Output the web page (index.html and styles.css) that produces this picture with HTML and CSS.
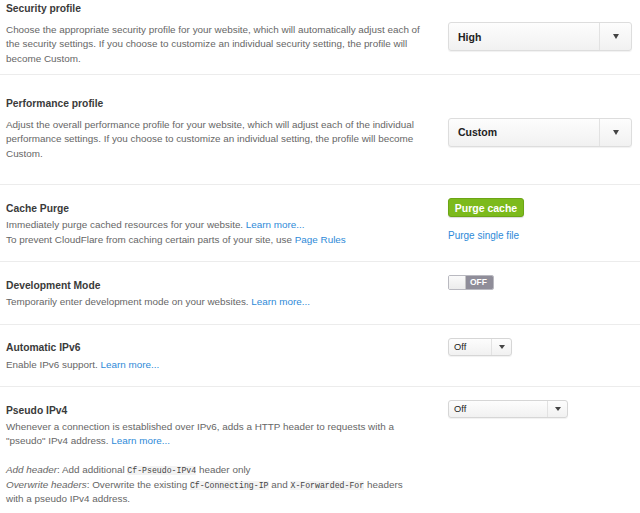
FILE: index.html
```html
<!DOCTYPE html>
<html lang="en">
<head>
  <meta charset="UTF-8" />
  <title>Settings</title>
  <link rel="stylesheet" href="styles.css">
</head>
<body>
  <div class="settings">
    <div class="row row-profile row-first">
      <div class="info">
        <h3>Security profile</h3>
        <p>Choose the appropriate security profile for your website, which will automatically adjust each of the security settings. If you choose to customize an individual security setting, the profile will become Custom.</p>
      </div>
      <div class="control">
        <div class="select select-lg"><span class="label">High</span><span class="arrow"><i class="caret"></i></span></div>
      </div>
    </div>

    <div class="row row-profile">
      <div class="info">
        <h3>Performance profile</h3>
        <p>Adjust the overall performance profile for your website, which will adjust each of the individual performance settings. If you choose to customize an individual setting, the profile will become Custom.</p>
      </div>
      <div class="control">
        <div class="select select-lg"><span class="label">Custom</span><span class="arrow"><i class="caret"></i></span></div>
      </div>
    </div>

    <div class="row">
      <div class="info">
        <h3>Cache Purge</h3>
        <p>Immediately purge cached resources for your website. <a href="#">Learn more...</a><br>To prevent CloudFlare from caching certain parts of your site, use <a href="#">Page Rules</a></p>
      </div>
      <div class="control">
        <button class="btn-green">Purge cache</button>
        <a href="#" class="single-link">Purge single file</a>
      </div>
    </div>

    <div class="row">
      <div class="info">
        <h3>Development Mode</h3>
        <p>Temporarily enter development mode on your websites. <a href="#">Learn more...</a></p>
      </div>
      <div class="control">
        <div class="toggle"><span class="knob"></span><span class="state">OFF</span></div>
      </div>
    </div>

    <div class="row">
      <div class="info">
        <h3>Automatic IPv6</h3>
        <p>Enable IPv6 support. <a href="#">Learn more...</a></p>
      </div>
      <div class="control">
        <div class="select select-sm"><span class="label">Off</span><span class="arrow"><i class="caret"></i></span></div>
      </div>
    </div>

    <div class="row row-last">
      <div class="info">
        <h3>Pseudo IPv4</h3>
        <p>Whenever a connection is established over IPv6, adds a HTTP header to requests with a "pseudo" IPv4 address. <a href="#">Learn more...</a></p>
        <p><em>Add header</em>: Add additional <code>Cf-Pseudo-IPv4</code> header only<br><em>Overwrite headers</em>: Overwrite the existing <code>Cf-Connecting-IP</code> and <code>X-Forwarded-For</code> headers with a pseudo IPv4 address.</p>
      </div>
      <div class="control">
        <div class="select select-sm select-wide"><span class="label">Off</span><span class="arrow"><i class="caret"></i></span></div>
      </div>
    </div>
  </div>
</body>
</html>
```

FILE: styles.css
```css
body { margin: 0; background: #fff; color: #666; font-family: "Liberation Sans", Arial, sans-serif; }
a { color: #2e8ad8; text-decoration: none; }

.row { display: flex; padding: 13px 0 14px; border-bottom: 1px solid #ececec; }
.row-last { border-bottom: none; }
.info { width: 416px; padding: 3.5px 0 0 6px; flex-shrink: 0; }
.info h3 { margin: 0 0 2.5px; font-size: 10.3px; line-height: 14px; color: #3a3a3a; }
.info p { margin: 0; font-size: 9.9px; line-height: 14.4px; }
.info p + p { margin-top: 14.4px; }
.info code { font-family: "Liberation Mono", monospace; font-size: 8.2px; line-height: 1; background: #f3f3f3; color: #444; }
.control { margin-left: 26px; display: flex; flex-direction: column; align-items: flex-start; }

.row-profile { padding: 22px 0 23.5px; }
.row-first { padding-top: 2px; padding-bottom: 7.5px; }
.row-profile .info { padding-top: 0; }
.row-profile .info h3 { margin-bottom: 7px; }
.row-profile .control { margin-top: 21px; }
.row-first .control { margin-top: 20px; }

.select { display: flex; box-sizing: border-box; border: 1px solid #ddd; border-radius: 3px; background: linear-gradient(#fdfdfd, #f1f1f1); box-shadow: 0 1px 1px rgba(0,0,0,0.06); color: #222; }
.select .label { flex: 1; display: flex; align-items: center; }
.select .arrow { display: flex; align-items: center; justify-content: center; border-left: 1px solid #e2e2e2; }
.caret { display: block; width: 0; height: 0; border-left: 3px solid transparent; border-right: 3px solid transparent; border-top: 5px solid #444; }
.select-lg { width: 184px; height: 29px; }
.select-lg .label { padding-left: 9px; font-size: 10.5px; font-weight: bold; }
.select-lg .arrow { width: 31px; }
.select-sm { width: 64px; height: 18px; border-color: #d6d6d6; }
.select-sm .label { padding-left: 5px; font-size: 9.3px; }
.select-sm .arrow { width: 19px; }
.select-sm .caret { border-top-width: 4px; }
.select-wide { width: 120px; }

.btn-green { width: 76px; height: 19px; padding: 0; border: 1px solid #6ca515; border-radius: 3px; background: #7cba1c; color: #fff; font-family: "Liberation Sans", Arial, sans-serif; font-size: 10.5px; font-weight: bold; box-shadow: 0 1px 1px rgba(0,0,0,0.15); }
.single-link { margin-top: 12px; font-size: 10px; line-height: 14px; }

.toggle { display: flex; width: 46px; height: 15px; border-radius: 2px; overflow: hidden; box-sizing: border-box; border: 1px solid #b9b9c0; }
.toggle .knob { width: 16px; background: linear-gradient(#fafafa, #ececec); border-right: 1px solid #c5c5c5; }
.toggle .state { flex: 1; background: #8f8d99; color: #fff; font-size: 8.5px; font-weight: bold; line-height: 13px; padding-left: 4px; }
```
